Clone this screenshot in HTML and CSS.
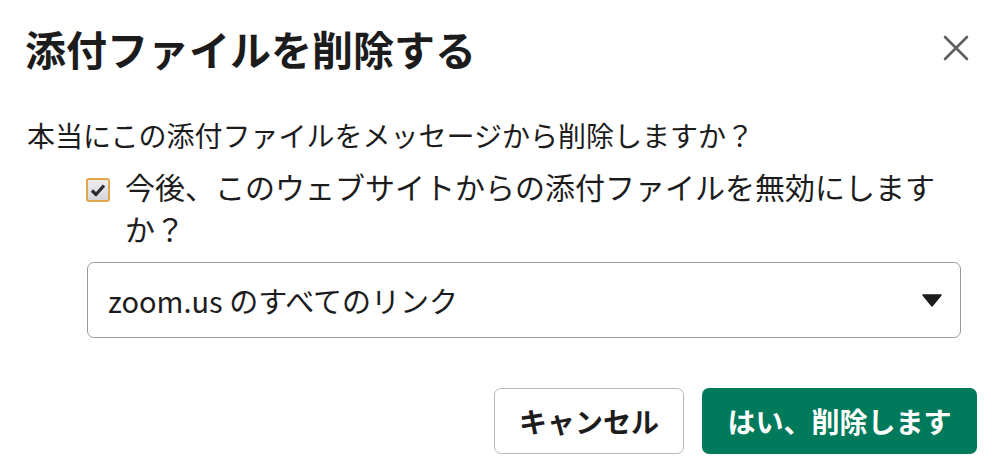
FILE: index.html
```html
<!DOCTYPE html>
<html lang="ja">
<head>
<meta charset="utf-8">
<link rel="stylesheet" href="styles.css">
</head>
<body>
<div class="dialog">
  <div class="header">
    <h1 class="title">添付ファイルを削除する</h1>
    <button class="close" aria-label="閉じる">
      <svg width="26" height="26" viewBox="0 0 26 26"><path d="M2 2 L24 24 M24 2 L2 24" stroke="#616061" stroke-width="2.6" stroke-linecap="round"/></svg>
    </button>
  </div>
  <p class="question">本当にこの添付ファイルをメッセージから削除しますか？</p>
  <div class="option">
    <span class="check">
      <svg width="16" height="14" viewBox="0 0 16 14"><path d="M2 7.5 L6 11.5 L14 2.5" fill="none" stroke="#2b2b2b" stroke-width="3.2" stroke-linejoin="round"/></svg>
    </span>
    <span class="label">今後、このウェブサイトからの添付ファイルを無効にしますか？</span>
  </div>
  <div class="select">
    <span class="select-text">zoom.us のすべてのリンク</span>
    <svg class="caret" width="20" height="13" viewBox="0 0 20 13"><path d="M1 1 H19 L10 12 Z" fill="#1d1c1d" stroke="#1d1c1d" stroke-width="1.5" stroke-linejoin="round"/></svg>
  </div>
  <div class="actions">
    <button class="btn cancel">キャンセル</button>
    <button class="btn danger">はい、削除します</button>
  </div>
</div>
</body>
</html>
```
FILE: styles.css
```css
html, body {
  margin: 0;
  padding: 0;
  background: #ffffff;
}
body {
  font-family: "Noto Sans CJK JP", "Noto Sans", sans-serif;
  color: #1d1c1d;
}
.dialog {
  width: 1000px;
  height: 473px;
  box-sizing: border-box;
  padding: 20px 23px 0 25px;
}
.header {
  display: flex;
  justify-content: space-between;
  align-items: center;
  height: 56px;
}
.title {
  margin: 0;
  font-size: 41px;
  font-weight: 700;
  line-height: 56px;
  color: #1d1c1d;
}
.close {
  border: 0;
  background: none;
  padding: 0;
  margin-right: 8px;
  width: 26px;
  height: 26px;
  display: flex;
}
.question {
  margin: 39px 0 0 2px;
  font-size: 28px;
  line-height: 40px;
}
.option {
  display: flex;
  align-items: flex-start;
  margin: 10px 16px 0 61px;
}
.check {
  flex: none;
  width: 20px;
  height: 20px;
  margin-top: 13px;
  border: 2px solid #e0a84a;
  border-radius: 3px;
  background: linear-gradient(#ececf0, #d6d7de);
  display: flex;
  align-items: center;
  justify-content: center;
}
.label {
  margin-left: 15px;
  font-size: 30px;
  line-height: 42px;
}
.select {
  margin: 13px 16px 0 62px;
  height: 76px;
  box-sizing: border-box;
  border: 1.5px solid #9a999a;
  border-radius: 7px;
  display: flex;
  align-items: center;
  justify-content: space-between;
  padding: 0 18px 0 20px;
}
.select-text {
  font-size: 29px;
}
.caret {
  display: block;
}
.actions {
  display: flex;
  justify-content: flex-end;
  gap: 18px;
  margin-top: 50px;
}
.btn {
  height: 66px;
  border-radius: 7px;
  font-family: "Noto Sans CJK JP", "Noto Sans", sans-serif;
  font-size: 28px;
  font-weight: 700;
  padding: 0 24px;
}
.cancel {
  width: 190px;
  background: #ffffff;
  border: 1.5px solid #b8b8b8;
  color: #1d1c1d;
}
.danger {
  width: 275px;
  background: #007a5a;
  border: 0;
  color: #ffffff;
}
```
